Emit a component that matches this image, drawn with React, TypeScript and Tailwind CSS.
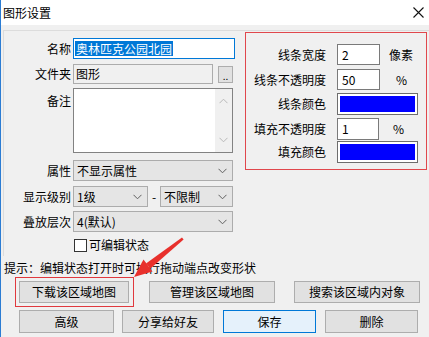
import React from "react";

function Chevron({ color = "#606060" }: { color?: string }) {
  return (
    <svg width="9" height="6" viewBox="0 0 9 6" className="shrink-0">
      <path d="M0.5 0.8 L4.5 4.8 L8.5 0.8" fill="none" stroke={color} strokeWidth="1" />
    </svg>
  );
}

function ChevronUp({ color = "#b8b8b8" }: { color?: string }) {
  return (
    <svg width="9" height="6" viewBox="0 0 9 6" className="shrink-0">
      <path d="M0.5 5.2 L4.5 1.2 L8.5 5.2" fill="none" stroke={color} strokeWidth="1" />
    </svg>
  );
}

function Select({ value, className = "" }: { value: string; className?: string }) {
  return (
    <div
      className={
        "h-[21px] border border-[#acacac] bg-[#e5e5e5] flex items-center justify-between pl-[3px] pr-[5px] " +
        className
      }
    >
      <span className="leading-none">{value}</span>
      <Chevron />
    </div>
  );
}

function Btn({ label, className = "" }: { label: string; className?: string }) {
  return (
    <div
      className={
        "flex items-center justify-center border border-[#adadad] bg-[#e1e1e1] text-[12px] leading-none " +
        className
      }
    >
      {label}
    </div>
  );
}

export default function App() {
  return (
    <div className="w-[429px] h-[337px] bg-[#f0f0f0] border-l border-[#2b7cd3] overflow-hidden relative text-[12px] text-black font-['Noto_Sans_CJK_SC','Noto_Sans',sans-serif]">
      {/* title bar */}
      <div className="h-[25px] bg-white flex items-center justify-between pl-[2px] pr-[5px]">
        <span className="text-[12px] leading-none">图形设置</span>
        <svg width="11" height="11" viewBox="0 0 11 11">
          <path d="M0.5 0.5 L10.5 10.5 M10.5 0.5 L0.5 10.5" stroke="#111" strokeWidth="1.1" />
        </svg>
      </div>

      {/* main frame */}
      <div className="mt-[5px] ml-[2px] h-[226px] border-t border-l border-[#dcdcdc] flex">
        {/* left column */}
        <div className="w-[236px] flex flex-col">
          {/* name */}
          <div className="mt-[7px] flex items-center h-[21px]">
            <div className="w-[67px] text-right leading-none">名称</div>
            <div className="ml-[2px] w-[162px] h-[21px] border border-[#0078d7] bg-white flex items-center pl-[1px]">
              <span className="bg-[#0078d7] text-white leading-[15px] px-[1px]">奥林匹克公园北园</span>
            </div>
          </div>
          {/* folder */}
          <div className="mt-[5px] flex items-center h-[20px]">
            <div className="w-[67px] text-right leading-none">文件夹</div>
            <div className="ml-[2px] w-[140px] h-[20px] border border-[#acacac] bg-[#f0f0f0] flex items-center pl-[2px] leading-none">
              图形
            </div>
            <div className="ml-[5px] w-[15px] h-[17px] border border-[#adadad] bg-[#e1e1e1] flex items-end justify-center text-[10px] leading-[12px]">
              ..
            </div>
          </div>
          {/* remark */}
          <div className="mt-[4px] flex h-[65px]">
            <div className="w-[67px] text-right leading-none pt-[7px]">备注</div>
            <div className="ml-[2px] w-[160px] h-[65px] border border-[#828282] bg-white flex justify-end">
              <div className="w-[17px] h-full bg-[#f0f0f0] flex flex-col items-center justify-between py-[9px]">
                <ChevronUp />
                <Chevron color="#b8b8b8" />
              </div>
            </div>
          </div>
          {/* property */}
          <div className="mt-[7px] flex items-center h-[21px]">
            <div className="w-[67px] text-right leading-none">属性</div>
            <Select value="不显示属性" className="ml-[2px] w-[160px]" />
          </div>
          {/* display level */}
          <div className="mt-[5px] flex items-center h-[21px]">
            <div className="w-[67px] text-right leading-none">显示级别</div>
            <Select value="1级" className="ml-[2px] w-[75px]" />
            <div className="w-[12px] text-center leading-none">-</div>
            <Select value="不限制" className="w-[73px]" />
          </div>
          {/* layer */}
          <div className="mt-[4px] flex items-center h-[21px]">
            <div className="w-[67px] text-right leading-none">叠放层次</div>
            <Select value="4(默认)" className="ml-[2px] w-[160px]" />
          </div>
          {/* checkbox */}
          <div className="mt-[6px] flex items-center h-[14px]">
            <div className="ml-[70px] w-[13px] h-[13px] border border-[#333] bg-white" />
            <span className="ml-[2px] text-[12px] leading-none">可编辑状态</span>
          </div>
        </div>

        {/* right red box */}
        <div className="ml-[5px] mt-[1px] w-[182px] h-[138px] border border-[#e0474c] flex flex-col">
          <div className="mt-[11px] flex items-center h-[21px]">
            <div className="w-[80px] text-right leading-none">线条宽度</div>
            <div className="ml-[11px] w-[43px] h-[21px] border border-[#7a7a7a] bg-white flex items-center pl-[4px] leading-none">
              2
            </div>
            <span className="ml-[9px] leading-none">像素</span>
          </div>
          <div className="mt-[4px] flex items-center h-[21px]">
            <div className="w-[80px] text-right leading-none">线条不透明度</div>
            <div className="ml-[11px] w-[43px] h-[21px] border border-[#7a7a7a] bg-white flex items-center pl-[4px] leading-none">
              50
            </div>
            <span className="ml-[16px] leading-none">%</span>
          </div>
          <div className="mt-[3px] flex items-center h-[22px]">
            <div className="w-[80px] text-right leading-none">线条颜色</div>
            <div className="ml-[11px] w-[81px] h-[22px] border border-[#6d6d6d] bg-white p-[2px]">
              <div className="w-full h-full bg-[#0000ff]" />
            </div>
          </div>
          <div className="mt-[3px] flex items-center h-[22px]">
            <div className="w-[80px] text-right leading-none">填充不透明度</div>
            <div className="ml-[11px] w-[42px] h-[22px] border border-[#7a7a7a] bg-white flex items-center pl-[4px] leading-none">
              1
            </div>
            <span className="ml-[14px] leading-none">%</span>
          </div>
          <div className="mt-[1px] flex items-center h-[22px]">
            <div className="w-[80px] text-right leading-none">填充颜色</div>
            <div className="ml-[11px] w-[81px] h-[22px] border border-[#6d6d6d] bg-white p-[2px]">
              <div className="w-full h-full bg-[#0000ff]" />
            </div>
          </div>
        </div>
      </div>

      {/* hint */}
      <div className="mt-[4px] ml-[3px] h-[16px] flex items-center text-[12px] leading-none">
        提示：编辑状态打开时可执行拖动端点改变形状
      </div>

      {/* buttons row 1 */}
      <div className="mt-[5px] flex h-[22px]">
        <Btn label="下载该区域地图" className="ml-[18px] w-[110px] h-[22px]" />
        <Btn label="管理该区域地图" className="ml-[20px] w-[126px] h-[22px]" />
        <Btn label="搜索该区域内对象" className="ml-[19px] w-[126px] h-[22px]" />
      </div>
      {/* buttons row 2 */}
      <div className="mt-[7px] flex h-[23px]">
        <Btn label="高级" className="ml-[18px] w-[95px] h-[23px]" />
        <Btn label="分享给好友" className="ml-[8px] w-[92px] h-[23px]" />
        <div className="ml-[9px] w-[93px] h-[23px] flex items-center justify-center border border-[#0078d7] bg-[#e5f1fb] text-[12px] leading-none">
          保存
        </div>
        <Btn label="删除" className="ml-[9px] w-[93px] h-[23px]" />
      </div>

      {/* red highlight box around first button */}
      <div className="absolute left-[14px] top-[277px] w-[119px] h-[30px] border border-[#e0393e] pointer-events-none" />

      {/* red arrow */}
      <svg className="absolute left-0 top-0 pointer-events-none" width="429" height="337" viewBox="0 0 429 337">
        <polygon points="181,237.6 182.6,239.6 149.5,268.6 145,263.5" fill="#e8302c" />
        <polygon points="133,277 142.5,259.5 151.5,271.5" fill="#e8302c" />
      </svg>
    </div>
  );
}
